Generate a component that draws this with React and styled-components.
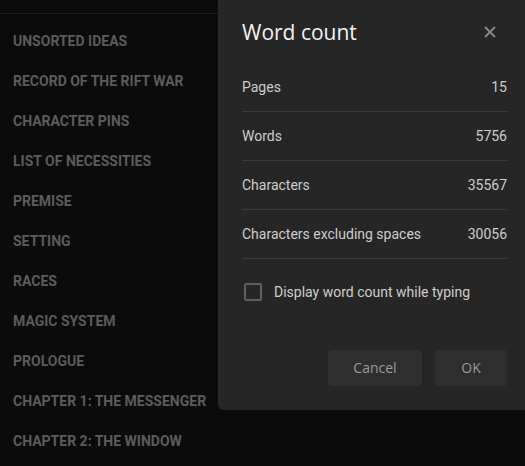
import React from "react";
import styled, { createGlobalStyle } from "styled-components";

const GlobalStyle = createGlobalStyle`
  html, body {
    margin: 0;
    padding: 0;
    background: #0b0b0b;
    font-family: Roboto, "Liberation Sans", sans-serif;
  }
`;

const Page = styled.div`
  position: relative;
  width: 525px;
  height: 466px;
  overflow: hidden;
  background: #0b0b0b;
`;

const TopBar = styled.div`
  height: 13px;
  border-bottom: 1px solid #1c1c1c;
`;

const NavList = styled.ul`
  list-style: none;
  margin: 0;
  padding: 7px 0 0 13px;
`;

const NavItem = styled.li`
  height: 40px;
  display: flex;
  align-items: center;
  font-size: 14px;
  font-weight: 700;
  color: #5b5b5b;
  text-transform: uppercase;
  white-space: nowrap;
`;

const Dialog = styled.div`
  position: absolute;
  top: 0;
  left: 218px;
  right: 0;
  height: 410px;
  background: #262626;
  border-bottom-left-radius: 6px;
  padding: 0 18px 0 24px;
  box-sizing: border-box;
  display: flex;
  flex-direction: column;
`;

const Header = styled.div`
  height: 63px;
  display: flex;
  align-items: center;
  justify-content: space-between;
`;

const Title = styled.h2`
  margin: 0;
  font-family: "Open Sans", Roboto, sans-serif;
  font-size: 21px;
  font-weight: 400;
  color: #f2f2f2;
`;

const CloseButton = styled.button`
  border: 0;
  background: none;
  padding: 0;
  margin-right: 5px;
  width: 24px;
  height: 24px;
  display: flex;
  align-items: center;
  justify-content: center;
  cursor: pointer;
`;

const Row = styled.div`
  height: 48px;
  display: flex;
  align-items: center;
  justify-content: space-between;
  border-bottom: 1px solid #3a3a3a;
  font-size: 14px;
  color: #cdcdcd;
`;

const CheckRow = styled.label`
  margin-top: 24px;
  display: flex;
  align-items: center;
  gap: 12px;
  font-size: 14px;
  color: #cdcdcd;
  padding-left: 2px;
`;

const Box = styled.span`
  width: 14px;
  height: 14px;
  border: 2px solid #5e5e5e;
  border-radius: 2px;
`;

const Footer = styled.div`
  margin-top: 49px;
  display: flex;
  justify-content: flex-end;
  gap: 13px;
`;

const Button = styled.button`
  height: 36px;
  width: ${(p) => p.$w}px;
  border: 0;
  border-radius: 4px;
  background: #2f2f2f;
  color: #9a9a9a;
  font-family: "Open Sans", Roboto, sans-serif;
  font-size: 14px;
  font-weight: 500;
  padding-bottom: 3px;
  cursor: pointer;
`;

const sections = [
  "Unsorted ideas",
  "Record of the rift war",
  "Character pins",
  "List of necessities",
  "Premise",
  "Setting",
  "Races",
  "Magic system",
  "Prologue",
  "Chapter 1: The messenger",
  "Chapter 2: The window",
];

const counts = [
  ["Pages", "15"],
  ["Words", "5756"],
  ["Characters", "35567"],
  ["Characters excluding spaces", "30056"],
];

export default function App() {
  return (
    <Page>
      <GlobalStyle />
      <TopBar />
      <NavList>
        {sections.map((s) => (
          <NavItem key={s}>{s}</NavItem>
        ))}
      </NavList>
      <Dialog>
        <Header>
          <Title>Word count</Title>
          <CloseButton aria-label="Close">
            <svg width="12" height="12" viewBox="0 0 12 12">
              <path d="M1 1 L11 11 M11 1 L1 11" stroke="#8a8a8a" strokeWidth="1.8" />
            </svg>
          </CloseButton>
        </Header>
        {counts.map(([k, v]) => (
          <Row key={k}>
            <span>{k}</span>
            <span>{v}</span>
          </Row>
        ))}
        <CheckRow>
          <Box />
          Display word count while typing
        </CheckRow>
        <Footer>
          <Button $w={94}>Cancel</Button>
          <Button $w={72}>OK</Button>
        </Footer>
      </Dialog>
    </Page>
  );
}
